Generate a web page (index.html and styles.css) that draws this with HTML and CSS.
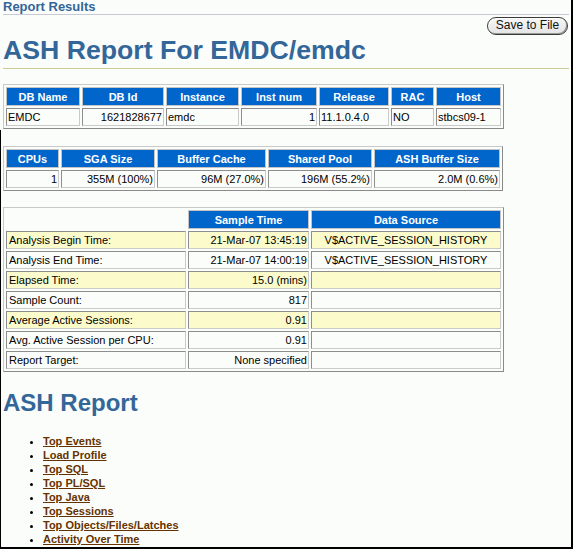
FILE: index.html
```html
<!DOCTYPE html>
<html>
<head>
<meta charset="utf-8">
<title>ASH Report</title>
<link rel="stylesheet" href="styles.css">
</head>
<body>
<div class="page">
  <div class="crumb">Report Results</div>
  <div class="toolbar"><button class="save-btn" type="button">Save to File</button></div>
  <h1 class="title">ASH Report For EMDC/emdc</h1>

  <table class="rpt rpt-db">
    <tr>
      <th class="w74">DB Name</th><th class="w82">DB Id</th><th class="w73">Instance</th><th class="w76">Inst num</th><th class="w70">Release</th><th class="w43">RAC</th><th class="w65">Host</th>
    </tr>
    <tr>
      <td>EMDC</td><td class="r">1621828677</td><td>emdc</td><td class="r">1</td><td>11.1.0.4.0</td><td>NO</td><td>stbcs09-1</td>
    </tr>
  </table>

  <table class="rpt rpt-mem">
    <tr>
      <th class="w53">CPUs</th><th class="w94">SGA Size</th><th class="w109">Buffer Cache</th><th class="w104">Shared Pool</th><th class="w126">ASH Buffer Size</th>
    </tr>
    <tr>
      <td class="r">1</td><td class="r">355M (100%)</td><td class="r">96M (27.0%)</td><td class="r">196M (55.2%)</td><td class="r">2.0M (0.6%)</td>
    </tr>
  </table>

  <table class="rpt rpt-time">
    <tr>
      <th class="w180 nobg"></th><th class="w121">Sample Time</th><th class="w190">Data Source</th>
    </tr>
    <tr class="hl"><td>Analysis Begin Time:</td><td class="r">21-Mar-07 13:45:19</td><td class="c">V$ACTIVE_SESSION_HISTORY</td></tr>
    <tr><td>Analysis End Time:</td><td class="r">21-Mar-07 14:00:19</td><td class="c">V$ACTIVE_SESSION_HISTORY</td></tr>
    <tr class="hl"><td>Elapsed Time:</td><td class="r">15.0 (mins)</td><td class="c"></td></tr>
    <tr><td>Sample Count:</td><td class="r">817</td><td class="c"></td></tr>
    <tr class="hl"><td>Average Active Sessions:</td><td class="r">0.91</td><td class="c"></td></tr>
    <tr><td>Avg. Active Session per CPU:</td><td class="r">0.91</td><td class="c"></td></tr>
    <tr><td>Report Target:</td><td class="r">None specified</td><td class="c"></td></tr>
  </table>

  <h2 class="subtitle">ASH Report</h2>
  <ul class="toc">
    <li><a href="#top-events">Top Events</a></li>
    <li><a href="#load-profile">Load Profile</a></li>
    <li><a href="#top-sql">Top SQL</a></li>
    <li><a href="#top-plsql">Top PL/SQL</a></li>
    <li><a href="#top-java">Top Java</a></li>
    <li><a href="#top-sessions">Top Sessions</a></li>
    <li><a href="#top-objects">Top Objects/Files/Latches</a></li>
    <li><a href="#activity">Activity Over Time</a></li>
  </ul>
</div>
</body>
</html>
```

FILE: styles.css
```css
* { box-sizing: border-box; }

html, body {
  margin: 0;
  padding: 0;
  background: #fbfdfb;
}

body {
  font-family: "Liberation Sans", Arial, sans-serif;
  color: #000;
}

.page {
  width: 573px;
  height: 549px;
  overflow: hidden;
  padding: 0 2px 0 3px;
  border-right: 2px solid #000;
  border-bottom: 2px solid #000;
  background: linear-gradient(#000, #000) no-repeat 0 130px / 1px 100%, #fbfdfb;
}

.crumb {
  font-weight: bold;
  font-size: 13px;
  line-height: 14px;
  color: #336699;
  border-bottom: 1px solid #c9c9d6;
}

.toolbar {
  display: flex;
  justify-content: flex-end;
  padding-top: 2px;
  height: 20px;
}

.save-btn {
  height: 18px;
  width: 81px;
  margin: 0 1px 0 0;
  padding: 0 0 1px;
  border: 1px solid #3a3a3a;
  border-radius: 9px;
  background: linear-gradient(#f6f6f6, #e4e4e4);
  box-shadow: inset 1px 1px 0 #ffffff, inset -1px -1px 0 #9a9a9a;
  font-family: "Liberation Sans", Arial, sans-serif;
  font-size: 12px;
  line-height: 15px;
  color: #111;
}

.title {
  margin: 0;
  padding: 0 0 2px;
  font-size: 26.67px;
  line-height: 31px;
  font-weight: bold;
  color: #336699;
  border-bottom: 1px solid #cccc99;
}

.rpt {
  border-collapse: separate;
  border-spacing: 2px;
  table-layout: fixed;
  border: 1px solid;
  border-color: #c8c8c8 #8a8a8a #8a8a8a #c8c8c8;
  font-size: 11px;
  line-height: 14px;
}

.rpt-db { margin-top: 15px; }
.rpt-mem { margin-top: 17px; }
.rpt-time { margin-top: 16px; }

.rpt th {
  padding: 2px 4px 1px;
  background: #0066cc;
  color: #fff;
  font-weight: bold;
  text-align: center;
  border: 1px solid #c4c4c4;
  white-space: nowrap;
}

.rpt th.nobg {
  background: transparent;
  border-color: transparent;
}

.rpt td {
  padding: 1px 1px 1px 1px;
  height: 18px;
  background: #fbfdfb;
  border: 1px solid;
  border-color: #8e8e8e #cacaca #cacaca #8e8e8e;
  white-space: nowrap;
  vertical-align: top;
}

.rpt-time td:first-child { padding-left: 2px; }

.rpt tr.hl td { background: #fbfbcb; }

.rpt td.r { text-align: right; }
.rpt td.c { text-align: center; }

.w43 { width: 43px; }
.w53 { width: 53px; }
.w65 { width: 65px; }
.w70 { width: 70px; }
.w73 { width: 73px; }
.w74 { width: 74px; }
.w76 { width: 76px; }
.w82 { width: 82px; }
.w94 { width: 94px; }
.w104 { width: 104px; }
.w109 { width: 109px; }
.w121 { width: 121px; }
.w126 { width: 126px; }
.w180 { width: 180px; }
.w190 { width: 190px; }

.subtitle {
  margin: 17px 0 0;
  font-size: 24px;
  line-height: 28px;
  font-weight: bold;
  color: #336699;
}

.toc {
  margin: 17px 0 0;
  padding-left: 40px;
  font-size: 11px;
  line-height: 14px;
}

.toc a {
  font-weight: bold;
  color: #663300;
  text-decoration: underline;
}
```
